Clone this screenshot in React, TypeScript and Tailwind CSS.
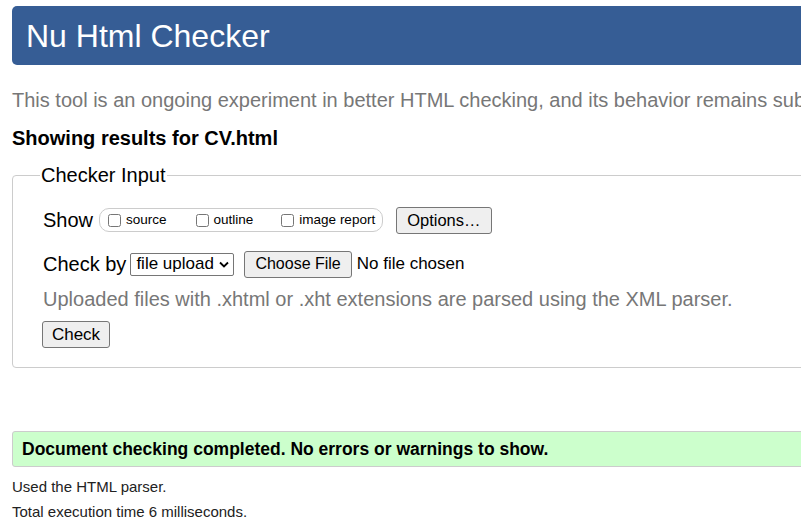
export default function App() {
  return (
    <div className="w-[801px] h-[526px] overflow-hidden bg-white font-['Liberation_Sans',Arial,sans-serif] text-[20px] text-black">
      <div className="w-[1100px] pl-[12px] pt-[6px]">
        <header className="h-[59px] rounded-[5px] bg-[#365d95] pl-[14px] flex items-center">
          <h1 className="text-[32px] text-white leading-none">Nu Html Checker</h1>
        </header>

        <p className="mt-[24px] text-[#777] leading-[22px]">
          This tool is an ongoing experiment in better HTML checking, and its behavior remains subject to change
        </p>
        <p className="mt-[16px] font-bold leading-[22px]">Showing results for CV.html</p>

        <fieldset className="mt-[15px] border border-[#ccc] rounded-[4px] pl-[30px] pb-[19px]">
          <legend className="ml-[-3px] px-[1px] leading-[22px]">Checker Input</legend>

          <div className="mt-[20px] flex items-center h-[28px]">
            <span>Show</span>
            <div className="ml-[6px] h-[24px] flex items-center border border-[#ccc] rounded-[10px] pl-[5px] pr-[7px] text-[13.5px]">
              <label className="flex items-end">
                <input type="checkbox" className="m-[3px] mr-[5px] w-[13px] h-[13px]" />
                <span>source</span>
              </label>
              <label className="ml-[26px] flex items-end">
                <input type="checkbox" className="m-[3px] mr-[5px] w-[13px] h-[13px]" />
                <span>outline</span>
              </label>
              <label className="ml-[25px] flex items-end">
                <input type="checkbox" className="m-[3px] mr-[5px] w-[13px] h-[13px]" />
                <span>image report</span>
              </label>
            </div>
            <button className="ml-[13px] h-[27px] px-[10px] border border-[#767676] rounded-[3px] bg-[#efefef] text-[16.5px]">
              Options…
            </button>
          </div>

          <div className="mt-[16px] flex items-center h-[28px]">
            <span>Check by</span>
            <div className="ml-[4px] h-[23px] w-[104px] border border-[#767676] rounded-[2px] flex items-center pl-[5px] pr-[4px] text-[17px]">
              <span className="flex-1">file upload</span>
              <svg width="10" height="7" viewBox="0 0 10 7">
                <path d="M1 1.5 L5 5.5 L9 1.5" fill="none" stroke="#000" strokeWidth="1.8" />
              </svg>
            </div>
            <button className="ml-[10px] h-[27px] px-[10px] border border-[#767676] rounded-[3px] bg-[#efefef] text-[16px]">
              Choose File
            </button>
            <span className="ml-[5px] text-[17px]">No file chosen</span>
          </div>

          <p className="mt-[10px] text-[#777] leading-[22px]">
            Uploaded files with .xhtml or .xht extensions are parsed using the XML parser.
          </p>

          <button className="mt-[11px] ml-[-1px] h-[27px] w-[68px] border border-[#767676] rounded-[3px] bg-[#efefef] text-[17px]">
            Check
          </button>
        </fieldset>

        <div className="mt-[63px] h-[36px] border border-[#ccc] rounded-[3px] bg-[#ccffcc] pl-[9px] flex items-center">
          <p className="font-bold text-[17.5px]">Document checking completed. No errors or warnings to show.</p>
        </div>

        <p className="mt-[10px] text-[15px] leading-[20px] text-[#222]">Used the HTML parser.</p>
        <p className="mt-[5px] text-[15px] leading-[20px] text-[#222]">Total execution time 6 milliseconds.</p>
      </div>
    </div>
  );
}
